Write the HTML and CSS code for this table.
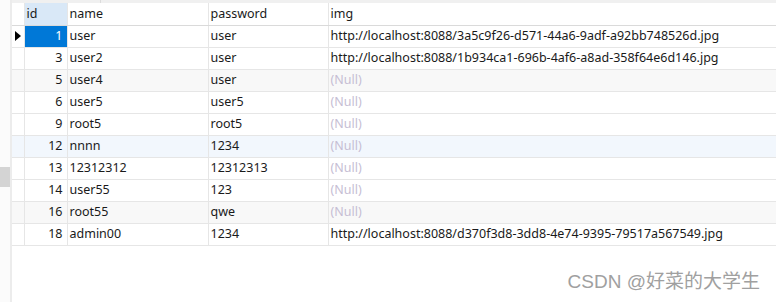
FILE: index.html
```html
<!DOCTYPE html>
<html lang="en">

<head>
	<meta charset="UTF-8">
	<title>user</title>
	<link rel="stylesheet" href="styles.css">
</head>

<body>
	<div class="window">
		<div class="side">
			<div class="side-thumb"></div>
		</div>
		<div class="side-line"></div>
		<div class="grid-wrap">
			<div class="top-strip"><span class="tick"></span></div>
			<table class="grid">
				<colgroup>
					<col class="c-sel">
					<col class="c-id">
					<col class="c-name">
					<col class="c-pass">
					<col class="c-img">
				</colgroup>
				<thead>
					<tr>
						<th class="sel"></th>
						<th class="id-head">id</th>
						<th>name</th>
						<th>password</th>
						<th>img</th>
					</tr>
				</thead>
				<tbody>
					<tr class="current">
						<td class="sel"><span class="arrow"></span></td>
						<td class="num picked">1</td>
						<td>user</td>
						<td>user</td>
						<td>http://localhost:8088/3a5c9f26-d571-44a6-9adf-a92bb748526d.jpg</td>
					</tr>
					<tr>
						<td class="sel"></td>
						<td class="num">3</td>
						<td>user2</td>
						<td>user</td>
						<td>http://localhost:8088/1b934ca1-696b-4af6-a8ad-358f64e6d146.jpg</td>
					</tr>
					<tr class="alt">
						<td class="sel"></td>
						<td class="num">5</td>
						<td>user4</td>
						<td>user</td>
						<td class="null">(Null)</td>
					</tr>
					<tr>
						<td class="sel"></td>
						<td class="num">6</td>
						<td>user5</td>
						<td>user5</td>
						<td class="null">(Null)</td>
					</tr>
					<tr>
						<td class="sel"></td>
						<td class="num">9</td>
						<td>root5</td>
						<td>root5</td>
						<td class="null">(Null)</td>
					</tr>
					<tr class="hover">
						<td class="sel"></td>
						<td class="num">12</td>
						<td>nnnn</td>
						<td>1234</td>
						<td class="null">(Null)</td>
					</tr>
					<tr>
						<td class="sel"></td>
						<td class="num">13</td>
						<td>12312312</td>
						<td>12312313</td>
						<td class="null">(Null)</td>
					</tr>
					<tr>
						<td class="sel"></td>
						<td class="num">14</td>
						<td>user55</td>
						<td>123</td>
						<td class="null">(Null)</td>
					</tr>
					<tr class="alt">
						<td class="sel"></td>
						<td class="num">16</td>
						<td>root55</td>
						<td>qwe</td>
						<td class="null">(Null)</td>
					</tr>
					<tr>
						<td class="sel"></td>
						<td class="num">18</td>
						<td>admin00</td>
						<td>1234</td>
						<td>http://localhost:8088/d370f3d8-3dd8-4e74-9395-79517a567549.jpg</td>
					</tr>
				</tbody>
			</table>
			<div class="empty">
				<span class="mark">CSDN @好菜的大学生</span>
			</div>
		</div>
	</div>
</body>

</html>
```

FILE: styles.css
```css
* {
	box-sizing: border-box;
}

body {
	margin: 0;
	width: 776px;
	height: 302px;
	overflow: hidden;
	background-color: #fff;
	font-family: 'Noto Sans', 'Noto Sans CJK SC', sans-serif;
	font-size: 12.5px;
	color: #1a1a1a;
}

.window {
	display: flex;
	height: 302px;
}

.side {
	width: 10px;
	flex-shrink: 0;
	background-color: #fbfbfb;
	padding-top: 167px;
}

.side-thumb {
	width: 10px;
	height: 20px;
	background-color: #d4d4d4;
}

.side-line {
	width: 2px;
	flex-shrink: 0;
	background-color: #ececec;
}

.grid-wrap {
	flex: 1;
	display: flex;
	flex-direction: column;
	min-width: 0;
	overflow: hidden;
}

.top-strip {
	height: 3px;
	background-color: #f0f0f0;
	padding-left: 88px;
}

.tick {
	display: block;
	width: 1px;
	height: 3px;
	background-color: #dcdcdc;
}

.grid {
	border-collapse: collapse;
	table-layout: fixed;
	width: 100%;
}

.c-sel { width: 12px; }
.c-id { width: 43px; }
.c-name { width: 141px; }
.c-pass { width: 120px; }

.grid th,
.grid td {
	height: 22px;
	padding: 0 2px;
	border: 1px solid #e6e6e6;
	white-space: nowrap;
	overflow: hidden;
	text-align: left;
	font-weight: 400;
	line-height: 20px;
}

.grid th {
	border-top: none;
	border-bottom-color: #dadada;
	color: #1a1a1a;
}

.grid tr > :first-child {
	border-left: none;
}

.grid tr > :last-child {
	border-right: none;
}

.grid .id-head {
	background-color: #d9e8f7;
}

.grid td.num {
	text-align: right;
	padding-right: 4px;
}

.grid td.sel {
	padding: 0;
	position: relative;
}

.arrow {
	position: absolute;
	left: 3px;
	top: 5px;
	width: 0;
	height: 0;
	border-top: 5px solid transparent;
	border-bottom: 5px solid transparent;
	border-left: 6px solid #000;
}

.grid td.picked {
	background-color: #0078d7;
	color: #fff;
}

.grid tr.alt td {
	background-color: #f8f8f8;
}

.grid tr.hover td {
	background-color: #f2f7fd;
}

.grid td.null {
	color: #c6bed4;
}

.empty {
	flex: 1;
	display: flex;
	justify-content: flex-end;
	align-items: flex-start;
	padding: 25px 16px 0 0;
}

.mark {
	font-family: 'Liberation Sans', 'Noto Sans CJK SC', sans-serif;
	font-size: 19px;
	line-height: 22px;
	color: #a0a0a0;
}
```
